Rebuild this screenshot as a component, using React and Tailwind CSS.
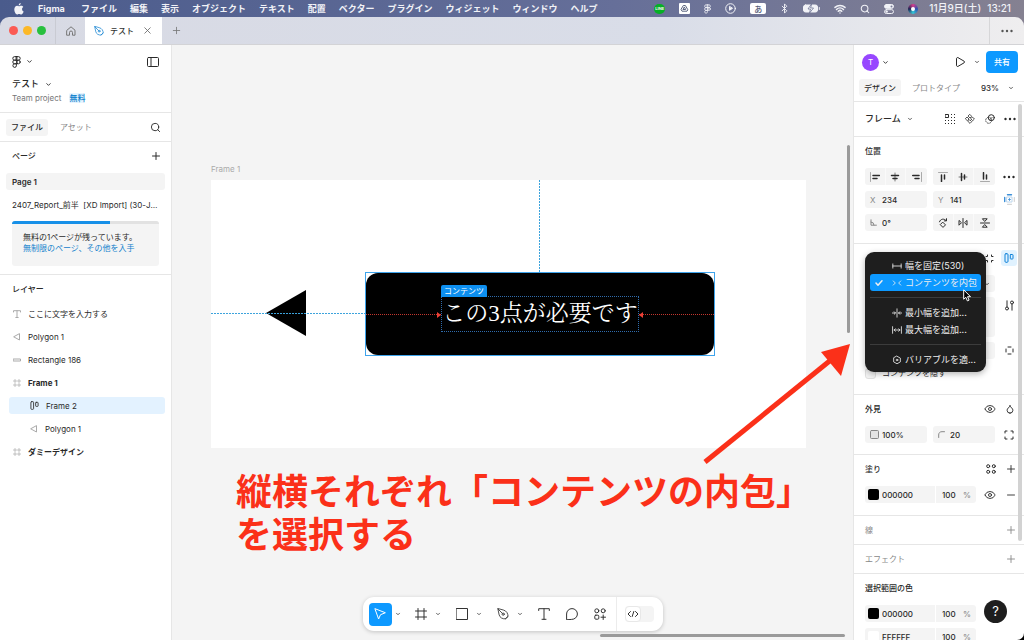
import React, { useState } from "react";
import {
  Bluetooth,
  ChevronDown,
  Droplet,
  Eye,
  Minus,
  Play,
  Plus,
  Search,
  Wifi,
  X,
} from "lucide-react";

const Svg = ({ w = 12, h = 12, box, className = "", children }) => (
  <svg
    width={w}
    height={h}
    viewBox={box || `0 0 ${w} ${h}`}
    fill="none"
    stroke="currentColor"
    strokeWidth="1"
    strokeLinecap="round"
    strokeLinejoin="round"
    className={`shrink-0 ${className}`}
    aria-hidden="true"
  >
    {children}
  </svg>
);

const FigmaIcon = ({ w = 9, h = 12 }) => (
  <Svg w={w} h={h} box="0 0 9 12">
    <path d="M4.5.6H2.6a1.8 1.8 0 0 0 0 3.6h1.9zM4.5.6h1.9a1.8 1.8 0 0 1 0 3.6H4.5zM4.5 4.2H2.6a1.8 1.8 0 0 0 0 3.6h1.9zM4.5 7.8H2.6a1.8 1.8 0 1 0 1.9 1.8z" />
    <circle cx="6.4" cy="6" r="1.8" />
  </Svg>
);

const PenIcon = ({ size = 12 }) => (
  <Svg w={size} h={size} box="0 0 14 14">
    <path d="M1 1l1.500 7c.8 3.200 4 5 7.500 4.600L12.800 10C13 6.500 11 3.200 8 2.500z" />
    <path d="M1.200 1.200l5 5" />
    <circle cx="7.200" cy="7.200" r="1.300" />
    <path d="M9.800 12.500l3-2.600" />
  </Svg>
);

const Dots = ({ className = "" }) => (
  <Svg w={12} h={4} className={className}>
    <g fill="currentColor" stroke="none">
      <circle cx="1.500" cy="2" r="1.200" />
      <circle cx="6" cy="2" r="1.200" />
      <circle cx="10.500" cy="2" r="1.200" />
    </g>
  </Svg>
);

const HashIcon = ({ size = 9 }) => (
  <Svg w={size} h={size} box="0 0 12 12">
    <path d="M3 .5v11M9 .5v11M.5 3h11M.5 9h11" />
  </Svg>
);

const Triangle = () => (
  <Svg w={8} h={8}>
    <path d="M6.500 1v6L1 4z" />
  </Svg>
);

const AutoLayoutIcon = ({ w = 10, h = 10 }) => (
  <Svg w={w} h={h} box="0 0 10 10">
    <rect x="1" y=".7" width="3" height="8.600" rx="1" />
    <rect x="6.300" y="1.500" width="2.700" height="4.500" rx=".6" />
  </Svg>
);

const Caret = ({ size = 7 }) => <ChevronDown size={size} strokeWidth={3} className="shrink-0" />;

const menus = [
  "ファイル",
  "編集",
  "表示",
  "オブジェクト",
  "テキスト",
  "配置",
  "ベクター",
  "プラグイン",
  "ウィジェット",
  "ウィンドウ",
  "ヘルプ",
];

const MenuBar = () => (
  <header className="flex h-[17px] items-center pr-[13px] pl-[14px] text-[9px] font-bold whitespace-nowrap text-[#f1f2f7]">
    <svg width="10" height="12" viewBox="0 0 10 12" fill="currentColor" aria-hidden="true">
      <path d="M6.700 0c.1 1.200-.9 2.400-2 2.400C4.600 1.300 5.600.2 6.700 0zM5 3.300c.5 0 1.200-.6 2.200-.6.900 0 1.700.5 2.100 1.200-1.900 1.100-1.500 3.800.4 4.600-.5 1.300-1.400 2.900-2.500 2.900-.8 0-1.100-.5-2.100-.5s-1.300.5-2 .5C1.700 11.400.3 8.700.3 6.500c0-2.300 1.400-3.700 2.800-3.700.8 0 1.400.5 1.900.5z" />
    </svg>
    <button className="ml-[14px] w-[43px] text-left">Figma</button>
    <nav className="flex gap-[13px]">
      {menus.map((name) => (
        <button key={name}>{name}</button>
      ))}
    </nav>
    <div className="ml-auto flex items-center gap-[14px] font-medium">
      <span className="flex h-[10px] w-[11px] items-center justify-center rounded-full bg-[#06b025] text-[4px] font-bold">
        LINE
      </span>
      <Svg w={11} h={11}>
        <rect width="11" height="11" rx="1" fill="#fff" stroke="none" />
        <path d="M4.700 2.500h1.700l2.400 4.200-.8 1.500H3L2.200 6.700zM4.300 6.500h2.400L5.500 4.300z" stroke="#5b6480" />
      </Svg>
      <FigmaIcon w={7} h={10} />
      <Svg w={11} h={11}>
        <circle cx="5.500" cy="5.500" r="4.800" />
        <path d="M4.500 3.700v3.600l2.800-1.800z" fill="currentColor" />
      </Svg>
      <span className="flex h-[11px] w-[16px] items-center justify-center rounded-[2px] bg-white text-[8px] text-[#555b78]">
        あ
      </span>
      <Bluetooth size={11} className="-mx-px" strokeWidth={2} />
      <Svg w={17} h={9}>
        <rect x=".5" y="1" width="14" height="7" rx="2" fill="currentColor" />
        <path d="M16.300 3.500v2" />
        <path d="M8.500 0L5 5h2.500L6.500 9l4-5H8z" fill="#fff" stroke="#6d7394" strokeWidth=".8" />
      </Svg>
      <Wifi size={12} strokeWidth={3} />
      <Search size={10} strokeWidth={2.5} />
      <Svg w={10} h={10}>
        <rect x=".5" y=".5" width="9" height="3.800" rx="1.900" fill="currentColor" />
        <circle cx="7.500" cy="2.400" r="1" fill="#777a96" stroke="none" />
        <rect x=".5" y="5.700" width="9" height="3.800" rx="1.900" />
        <circle cx="2.700" cy="7.600" r="1.200" fill="currentColor" stroke="none" />
      </Svg>
      <span className="h-[10px] w-[10px] rounded-full bg-[conic-gradient(#d33f8d,#2b4fae,#35c8d8,#1c2352,#d33f8d)] p-[3px]">
        <span className="block h-1 w-1 rounded-full bg-white" />
      </span>
      <time className="-ml-[3px] flex gap-[6px] text-[10px]">
        <span>11月9日(土)</span>
        <span>13:21</span>
      </time>
    </div>
  </header>
);

const TabBar = () => (
  <div className="flex h-[28px] items-stretch rounded-t-[9px] border-b border-[#d3d3d6] bg-linear-to-r from-[#d8dae4] via-[#d9dde8] via-65% to-[#efeeef] text-[8px] text-[#333]">
    <div className="flex w-[56px] items-center gap-[5px] border-r border-[#c9cbd3] pl-[9px]">
      <button aria-label="閉じる" className="h-[9px] w-[9px] rounded-full bg-[#fb5b54]" />
      <button aria-label="しまう" className="h-[9px] w-[9px] rounded-full bg-[#fcb827]" />
      <button aria-label="拡大" className="h-[9px] w-[9px] rounded-full bg-[#28c03e]" />
    </div>
    <button aria-label="ホーム" className="flex w-[29px] items-center justify-center text-[#777]">
      <Svg w={10} h={10}>
        <path d="M1 4.200L5 .8l4 3.400v5H6.500V6.500a1.500 1.500 0 0 0-3 0v2.700H1z" />
      </Svg>
    </button>
    <div className="flex w-[77px] items-center bg-white pl-[9px]">
      <span className="text-[#0d7fd0]">
        <PenIcon size={10} />
      </span>
      <span className="ml-[6px] font-medium">テスト</span>
      <button aria-label="タブを閉じる" className="ml-[8px] text-[#666]">
        <X size={11} strokeWidth={1.8} />
      </button>
    </div>
    <button aria-label="新しいタブ" className="flex w-[29px] items-center justify-center text-[#777]">
      <Plus size={11} strokeWidth={1.8} />
    </button>
    <button
      aria-label="その他"
      className="ml-auto flex w-[35px] items-center justify-center border-l border-[#d6d6d8] text-[#555]"
    >
      <Dots />
    </button>
  </div>
);

const layers = [
  {
    name: "ここに文字を入力する",
    icon: (
      <Svg w={8} h={8}>
        <path d="M.5 2V.700h7V2M4 .7v6.800M2.800 7.500h2.400" />
      </Svg>
    ),
  },
  { name: "Polygon 1", icon: <Triangle /> },
  {
    name: "Rectangle 186",
    icon: (
      <Svg w={8} h={8}>
        <rect x=".5" y="3" width="7" height="2" />
      </Svg>
    ),
  },
  { name: "Frame 1", icon: <HashIcon size={8} />, bold: true },
  { name: "Frame 2", icon: <AutoLayoutIcon w={9} h={9} />, child: true, selected: true },
  { name: "Polygon 1", icon: <Triangle />, child: true },
  { name: "ダミーデザイン", icon: <HashIcon size={8} />, bold: true },
];

const LeftPanel = () => (
  <aside className="w-[172px] shrink-0 border-r border-[#e6e6e6] bg-white">
    <div className="h-[68px] border-b border-[#e6e6e6] px-3">
      <div className="flex h-[33px] items-center justify-between">
        <button aria-label="メインメニュー" className="flex items-center gap-[5px]">
          <FigmaIcon />
          <Caret />
        </button>
        <button aria-label="サイドバー">
          <Svg w={12} h={10}>
            <rect x=".5" y=".5" width="11" height="9" rx="1" />
            <path d="M4 .5v9" />
          </Svg>
        </button>
      </div>
      <button className="flex h-[12px] items-center gap-[6px] text-[9px] font-medium">
        テスト
        <Caret />
      </button>
      <div className="flex h-[15px] items-center gap-2 text-[8px] text-[#777]">
        Team project
        <span className="rounded-[2px] bg-[#e5f4ff] leading-[10px] font-medium text-[#0a80cc]">無料</span>
      </div>
    </div>

    <div className="flex h-[29px] items-center border-b border-[#e6e6e6] pr-[10px] pl-[6px]">
      <button className="h-[17px] rounded-[3px] bg-[#f4f4f4] px-[5px] font-medium">ファイル</button>
      <button className="ml-[12px] text-[#888]">アセット</button>
      <button aria-label="検索" className="ml-auto">
        <Search size={11} strokeWidth={2} />
      </button>
    </div>

    <section className="border-b border-[#e6e6e6] pb-2">
      <div className="flex h-[27px] items-center justify-between pr-[9px] pl-3">
        <h2 className="font-medium">ページ</h2>
        <button aria-label="ページを追加">
          <Plus size={12} strokeWidth={2} />
        </button>
      </div>
      <div className="mt-1 px-[6px]">
        <button className="block h-[17px] w-full rounded-[3px] bg-[#f4f4f4] pl-[6px] text-left font-semibold">
          Page 1
        </button>
      </div>
      <button className="mt-[6px] block h-[17px] w-full truncate px-3 text-left whitespace-pre">
        {"2407_Report_前半  [XD Import] (30-June)"}
      </button>
      <div className="mx-3 mt-2 overflow-hidden rounded-[3px] bg-[#f4f4f4]">
        <div className="h-[3px] bg-[#e2e2e2]">
          <div className="h-[3px] w-2/3 bg-[#1790e8]" />
        </div>
        <div className="px-[11px] pt-2 pb-3 leading-[11px] whitespace-nowrap">
          <p>無料の1ページが残っています。</p>
          <a href="#upgrade" className="block text-[#1280cc]">
            無制限のページ、その他を入手
          </a>
        </div>
      </div>
    </section>

    <section>
      <h2 className="flex h-[27px] items-center pl-3 font-medium">レイヤー</h2>
      <ul>
        {layers.map((layer, i) => (
          <li key={i} className="flex h-[23px] items-center pr-[6px] pl-[9px]">
            <button
              className={`flex h-[17px] w-full items-center gap-[7px] rounded-[3px] ${
                layer.child ? "pl-[21px]" : "pl-1"
              } ${layer.selected ? "bg-[#e3f2ff]" : ""} ${layer.bold ? "font-bold" : ""}`}
            >
              <span className={layer.selected ? "text-[#333]" : "text-[#aaa]"}>{layer.icon}</span>
              {layer.name}
            </button>
          </li>
        ))}
      </ul>
    </section>
  </aside>
);

const tools = [
  { label: "フレーム", icon: <HashIcon size={12} />, menu: true },
  {
    label: "長方形",
    icon: (
      <Svg w={12} h={12}>
        <rect x=".5" y=".5" width="11" height="11" />
      </Svg>
    ),
    menu: true,
  },
  { label: "ペン", icon: <PenIcon />, menu: true },
  {
    label: "テキスト",
    icon: (
      <Svg>
        <path d="M.7 2.500V.7h10.600v1.800M6 .7v10.600M4 11.300h4" />
      </Svg>
    ),
  },
  {
    label: "コメント",
    icon: (
      <Svg>
        <path d="M.6 11.400V6A5.400 5.400 0 1 1 6 11.400z" />
      </Svg>
    ),
  },
  {
    label: "アクション",
    icon: (
      <Svg>
        <circle cx="2.800" cy="2.800" r="2" />
        <circle cx="9.200" cy="2.800" r="2" />
        <rect x=".8" y="7.200" width="4" height="4" rx="1" />
        <path d="M9.200 7v4.500M7 9.200h4.500" />
      </Svg>
    ),
  },
];

const Toolbar = () => (
  <div className="absolute inset-x-0 bottom-[9px] flex justify-center">
    <div className="flex h-[34px] items-center rounded-[11px] bg-white pl-[6px] text-[#333] shadow-[0_1px_4px_rgba(0,0,0,0.2)]">
      <button
        aria-label="移動"
        className="flex h-[23px] w-[23px] items-center justify-center rounded-[4px] bg-[#0d99ff] text-white"
      >
        <Svg>
          <path d="M1 1l3.600 10L6.500 6.700 11 4.900z" />
        </Svg>
      </button>
      <span className="ml-[3px]">
        <Caret size={6} />
      </span>
      <div className="ml-[14px] flex items-center gap-4">
        {tools.map((tool) => (
          <button
            key={tool.label}
            aria-label={tool.label}
            className={`flex items-center ${tool.menu ? "-mr-px gap-[8px]" : ""}`}
          >
            {tool.icon}
            {tool.menu && <Caret size={6} />}
          </button>
        ))}
      </div>
      <div className="ml-[10px] flex h-full items-center border-l border-[#ececec] pr-[9px] pl-[8px]">
        <button aria-label="開発モード" className="w-[29px] rounded-[4px] bg-[#f4f4f4]">
          <span className="flex h-4 w-4 items-center justify-center rounded-[4px] border border-[#e8e8e8] bg-white">
            <Svg w={12} h={8}>
              <path d="M3.500 1.500L1 4l2.500 2.500M8.500 1.500L11 4 8.500 6.500M6.800 1.500l-1.600 5" />
            </Svg>
          </span>
        </button>
      </div>
    </div>
  </div>
);

const Canvas = () => (
  <main className="relative min-w-0 flex-1 overflow-hidden bg-[#f4f4f4]">
    <span className="absolute top-[119px] left-[39px] leading-[11px] text-[#aaa]">Frame 1</span>
    <div className="absolute top-[135px] left-[39px] h-[268px] w-[595px] bg-white">
      <svg className="absolute top-[110px] left-[55px]" width="40" height="46" aria-hidden="true">
        <path d="M0 23L40 0v46z" fill="#000" />
      </svg>
      <svg className="absolute top-0 left-0" width="330" height="134" fill="none" stroke="#3da3dc" strokeDasharray="2 1" aria-hidden="true">
        <path d="M328.500 0v92M0 133.500h154" />
      </svg>

      <div className="absolute top-[92px] left-[154px] h-[84px] w-[350px] border border-[#3ea4ec]">
        <div className="flex h-full items-center rounded-[12px] bg-black">
          <div className="relative flex-1 border-t border-dotted border-[#c4372f]">
            <span className="absolute -top-[3px] right-0 border-y-[3px] border-l-4 border-y-transparent border-l-[#ee4035]" />
          </div>
          <div className="relative flex h-[36px] w-[198px] items-center justify-center border border-dotted border-[#2f6bab]">
            <span className="absolute bottom-full -left-px rounded-t-[2px] bg-[#0d8ff0] px-[3px] leading-[12px] whitespace-nowrap text-white">
              コンテンツ
            </span>
            <p className="font-['Liberation_Serif','Noto_Serif_CJK_JP','Noto_Sans_CJK_JP',serif] text-[23px] leading-[34px] whitespace-nowrap text-white">
              この3点が必要です
            </p>
          </div>
          <div className="relative flex-1 border-t border-dotted border-[#c4372f]">
            <span className="absolute -top-[3px] left-0 border-y-[3px] border-r-4 border-y-transparent border-r-[#ee4035]" />
          </div>
        </div>
      </div>
    </div>

    <p className="absolute top-[426px] left-[64px] font-['Liberation_Sans','Noto_Sans_CJK_JP',sans-serif] text-[36px] leading-[43px] font-bold whitespace-nowrap text-[#fb3019]">
      縦横それぞれ「コンテンツの内包」
      <br />
      を選択する
    </p>
    <svg
      className="absolute top-[295px] left-[529px]"
      width="152"
      height="126"
      aria-hidden="true"
    >
      <path d="M4 122L136 15" stroke="#fb3019" strokeWidth="5" />
      <path d="M149 4L120 12l20 24z" fill="#fb3019" />
    </svg>

    <Toolbar />
    <div className="absolute top-[100px] right-[3px] h-[188px] w-[3px] rounded-full bg-[#9a9a9a]" />
    <div className="absolute right-[8px] bottom-[3px] h-[3px] w-[245px] rounded-full bg-[#9a9a9a]" />
  </main>
);

const Section = ({ title, muted, actions, children, className = "" }) => (
  <section className={`border-b border-[#e6e6e6] pr-[7px] pl-[11px] ${className}`}>
    <div className="flex h-[28px] items-center justify-between">
      <h2 className={muted ? "text-[#888]" : "font-medium"}>{title}</h2>
      <div className="flex items-center gap-[9px]">{actions}</div>
    </div>
    {children}
  </section>
);

const Row = ({ children }) => (
  <div className="grid grid-cols-[1fr_1fr_16px] items-center gap-[6px]">{children}</div>
);

const Field = ({ label, icon, value }) => (
  <label className="flex h-[17px] items-center rounded-[3px] bg-[#f4f4f4] pl-[5px] font-medium">
    <span className="flex w-[12px] shrink-0 font-normal text-[#888]">{icon || label}</span>
    <input aria-label={label} defaultValue={value} className="w-full min-w-0 bg-transparent outline-none" />
  </label>
);

const Segments = ({ items }) => (
  <div className="grid h-[17px] grid-cols-3 overflow-hidden rounded-[3px] bg-[#fafafa]">
    {items.map(([label, path]) => (
      <button key={label} aria-label={label} className="flex items-center justify-center border-r border-[#fafafa] bg-[#f4f4f4] last:border-r-0">
        <Svg w={10} h={10}>{path}</Svg>
      </button>
    ))}
  </div>
);

const horizontal = [
  ["左揃え", <><path d="M.5.5v9" stroke="#aaa" /><path d="M3 3.500h6.500M3 6.500h4" strokeWidth="1.500" /></>],
  ["水平中央", <><path d="M5 1v8" stroke="#777" /><path d="M1.500 3.500h7M3 6.500h4" strokeWidth="1.500" /></>],
  ["右揃え", <><path d="M9.500.5v9" stroke="#aaa" /><path d="M.7 3.500H7M3 6.500h4" strokeWidth="1.500" /></>],
];

const vertical = [
  ["上揃え", <><path d="M.5.5h9" stroke="#aaa" /><path d="M3.500 3v6.500M6.500 3v4" strokeWidth="1.500" /></>],
  ["垂直中央", <><path d="M1 5h8" stroke="#777" /><path d="M3.500 1.500v7M6.500 3v4" strokeWidth="1.500" /></>],
  ["下揃え", <><path d="M.5 9.500h9" stroke="#aaa" /><path d="M3.500.7V7M6.500 3v4" strokeWidth="1.500" /></>],
];

const transforms = [
  ["回転", <><path d="M5 4.400l2.500 2.500L5 9.400 2.500 6.900z" /><path d="M1.500 3.800C2.500.5 6.500.3 8.300 2.700M8.500.7v2.200H6.300" /></>],
  ["左右反転", <><path d="M5 .5v9M1 2.800v4.400L3.200 5zM9 2.800v4.400L6.800 5z" /></>],
  ["上下反転", <><path d="M.5 5h9M2.800.8h4.400L5 3.200zM2.800 9.200h4.400L5 6.800z" /></>],
];

const ColorRow = ({ color, swatch, children }) => (
  <div className="flex items-center">
    <div className="flex h-[17px] w-[111px] overflow-hidden rounded-[3px] bg-[#f4f4f4] font-medium">
      <label className="flex w-[71px] items-center border-r border-white pl-[3px]">
        <span className={`mr-[3px] h-[11px] w-[11px] shrink-0 rounded-[2px] ${swatch}`} />
        <input aria-label="色" defaultValue={color} className="w-full min-w-0 bg-transparent outline-none" />
      </label>
      <label className="flex flex-1 items-center justify-between pr-[5px] pl-[6px]">
        <input aria-label="不透明度" defaultValue="100" className="w-[18px] bg-transparent outline-none" />
        <span className="text-[#888]">%</span>
      </label>
    </div>
    <div className="ml-auto flex items-center gap-[9px]">{children}</div>
  </div>
);

const sizeOptions = [
  { label: "幅を固定(530)", path: <path d="M1 3.500v5M11 3.500v5M1 6h10" /> },
  { label: "コンテンツを内包", path: <path d="M1.500 3.500L4 6 1.500 8.500M10.500 3.500L8 6l2.500 2.500" /> },
  { label: "最小幅を追加...", path: <path d="M6 1v10M.5 6h3.500M2.700 4.500L4.200 6 2.700 7.500M11.500 6H8M9.300 4.500L7.800 6l1.500 1.500" />, divider: true },
  { label: "最大幅を追加...", path: <path d="M.7 2v8M11.300 2v8M2.500 6h7M4 4.500L2.500 6 4 7.500M8 4.500L9.500 6 8 7.500" /> },
  { label: "バリアブルを適...", path: <><path d="M6 1.500l4 2.200v4.600l-4 2.200-4-2.200V3.700z" /><circle cx="6" cy="6" r="1" /></>, divider: true },
];

const SizeMenu = () => {
  const [selected, setSelected] = useState("コンテンツを内包");

  return (
    <div
      role="menu"
      className="absolute top-[8px] left-[11px] z-10 w-[121px] rounded-[9px] bg-[#1e1e1e] px-[5px] pt-[5px] pb-1 text-[9px] text-[#eee] shadow-[0_2px_6px_rgba(0,0,0,0.3)]"
    >
      {sizeOptions.map((option) => (
        <React.Fragment key={option.label}>
          {option.divider && <div className="my-[6px] h-px bg-[#3c3c3c]" />}
          <button
            role="menuitemradio"
            aria-checked={selected === option.label}
            onClick={() => setSelected(option.label)}
            className={`flex h-[17px] w-full items-center rounded-[3px] pl-[5px] whitespace-nowrap ${
              selected === option.label ? "bg-[#0d99ff]" : ""
            }`}
          >
            <span className="w-[17px]">
              {selected === option.label && (
                <Svg w={8} h={8}>
                  <path d="M1 4l2 2.200L7 1.800" strokeWidth="1.500" />
                </Svg>
              )}
            </span>
            <Svg w={10} h={10} box="0 0 12 12" className="mr-[3px]">{option.path}</Svg>
            {option.label}
          </button>
        </React.Fragment>
      ))}
      <svg className="absolute top-[37px] left-[98px]" width="9" height="13" viewBox="0 0 9 13" aria-hidden="true">
        <path d="M.7.8v9.400l2.100-1.900 1.600 3.600 1.700-.8-1.600-3.400h3z" fill="#000" stroke="#fff" />
      </svg>
    </div>
  );
};

const FourDots = () => (
  <Svg w={10} h={10}>
    <circle cx="2.200" cy="2.200" r="1.500" />
    <circle cx="7.800" cy="2.200" r="1.500" />
    <circle cx="2.200" cy="7.800" r="1.500" />
    <circle cx="7.800" cy="7.800" r="1.500" />
  </Svg>
);

const IconButton = ({ label, className = "", children }) => (
  <button aria-label={label} className={`flex h-4 w-4 items-center justify-center ${className}`}>
    {children}
  </button>
);

const RightPanel = () => (
  <aside className="relative w-[171px] shrink-0 overflow-hidden border-l border-[#e6e6e6] bg-white">
    <div className="flex h-[34px] items-center pr-[6px] pl-2">
      <button aria-label="アカウント" className="flex items-center gap-[3px]">
        <span className="flex h-[17px] w-[17px] items-center justify-center rounded-full bg-[#9747ff] text-white">T</span>
        <Caret />
      </button>
      <button aria-label="プレビュー" className="ml-auto flex items-center gap-[8px]">
        <Play size={12} strokeWidth={2} />
        <Caret size={6} />
      </button>
      <button className="ml-[6px] h-[22px] w-[32px] rounded-[4px] bg-[#0d99ff] font-medium text-white">共有</button>
    </div>
    <div className="flex h-[23px] items-start border-b border-[#e6e6e6] pr-[10px] pl-[5px]">
      <button className="h-[17px] w-[42px] rounded-[3px] bg-[#f4f4f4] font-medium">デザイン</button>
      <button className="ml-[11px] h-[17px] text-[#888]">プロトタイプ</button>
      <button className="ml-auto flex h-[17px] items-center gap-[9px] font-medium">
        93%
        <Caret size={6} />
      </button>
    </div>
    <div className="flex h-[35px] items-center border-b border-[#e6e6e6] pr-[6px] pl-[11px]">
      <button className="flex items-center gap-[6px] text-[9px] font-medium">
        フレーム
        <Caret size={6} />
      </button>
      <div className="ml-auto flex items-center gap-1">
        <IconButton label="選択">
          <Svg w={10} h={10}>
            <rect x=".5" y=".5" width="3" height="3" />
            <path
              d="M6 .5h1M9 .5h1M6 3.500h1M9 3.500h1M0 6.500h1M3 6.500h1M6 6.500h1M9 6.500h1M0 9.500h1M3 9.500h1M6 9.500h1M9 9.500h1"
              strokeLinecap="butt"
            />
          </Svg>
        </IconButton>
        <IconButton label="コンポーネント">
          <Svg w={10} h={10}>
            <path
              d="M5 .6l1.700 1.700L5 4 3.300 2.300zM5 6l1.700 1.700L5 9.400 3.300 7.700zM2.300 3.300L4 5 2.300 6.700.6 5zM7.700 3.300L9.400 5 7.700 6.700 6 5z"
              strokeWidth=".8"
            />
          </Svg>
        </IconButton>
        <IconButton label="マスク">
          <Svg w={10} h={10}>
            <circle cx="6.300" cy="3.700" r="3" />
            <circle cx="3.700" cy="6.300" r="3" strokeDasharray="1 1.500" strokeWidth=".8" />
            <path d="M5 5.500l2-2" />
          </Svg>
        </IconButton>
        <IconButton label="その他">
          <Dots />
        </IconButton>
      </div>
    </div>

    <Section title="位置" className="pb-3">
      <div className="mt-[3px] flex flex-col gap-[6px]">
        <Row>
          <Segments items={horizontal} />
          <Segments items={vertical} />
          <IconButton label="その他">
            <Dots />
          </IconButton>
        </Row>
        <Row>
          <Field label="X" value="234" />
          <Field label="Y" value="141" />
          <IconButton label="絶対位置" className="text-[#3b8fd8]">
            <Svg w={11} h={11}>
              <path d="M3.500.7h4M.7 3.500v4" strokeWidth="1.400" />
              <path d="M10.300 3.500v4M3.500 10.300h4" stroke="#ccc" />
              <rect x="3" y="3" width="5" height="5" stroke="#bdd6ec" />
              <path d="M5.500 4.500v2M4.500 5.500h2" strokeWidth=".8" />
            </Svg>
          </IconButton>
        </Row>
        <Row>
          <Field
            label="角度"
            icon={
              <Svg w={7} h={7}>
                <path d="M1 .8v5.400h5.400M1 3a3 3 0 0 1 3 3" />
              </Svg>
            }
            value="0°"
          />
          <Segments items={transforms} />
        </Row>
      </div>
    </Section>

    <section className="relative border-b border-[#e6e6e6] pr-[7px] pb-[12px] pl-[11px]">
      <div className="flex h-[28px] items-center justify-end gap-[4px]">
        <IconButton label="サイズ自動調整">
          <Svg w={9} h={9}>
            <path d="M1 2.500h1.500V1M8 2.500H6.500V1M1 6.500h1.500V8M8 6.500H6.500V8" />
          </Svg>
        </IconButton>
        <IconButton label="オートレイアウト" className="rounded-[3px] bg-[#e0f2ff] text-[#0d80d8]">
          <AutoLayoutIcon />
        </IconButton>
      </div>
      <div className="mt-[3px] flex flex-col gap-[5px]">
        <Row>
          <div className="h-[17px] rounded-[3px] bg-[#f4f4f4]" />
          <button aria-label="高さ" className="flex h-[17px] items-center justify-end rounded-[3px] bg-[#f4f4f4] pr-[5px]">
            <Caret size={6} />
          </button>
        </Row>
        <Row>
          <div className="h-[40px] rounded-[3px] bg-[#f4f4f4]" />
          <div className="h-[40px] rounded-[3px] bg-[#f4f4f4]" />
          <IconButton label="詳細設定" className="self-start">
            <Svg w={9} h={11}>
              <path d="M2 .8v6M7 4v6.200" />
              <circle cx="2" cy="8.500" r="1.500" />
              <circle cx="7" cy="2.500" r="1.500" />
            </Svg>
          </IconButton>
        </Row>
        <Row>
          <div className="h-[17px] rounded-[3px] bg-[#f4f4f4]" />
          <div className="h-[17px] rounded-[3px] bg-[#f4f4f4]" />
          <IconButton label="個別パディング">
            <Svg w={9} h={9}>
              <path d="M3 1h3M3 8h3M1 3v3M8 3v3" />
            </Svg>
          </IconButton>
        </Row>
        <label className="flex h-[18px] items-center gap-[6px]">
          <input
            type="checkbox"
            className="h-[11px] w-[11px] appearance-none rounded-[3px] border border-[#e0e0e0] bg-[#f4f4f4]"
          />
          コンテンツを隠す
        </label>
      </div>
      <SizeMenu />
    </section>

    <Section
      title="外見"
      className="pb-[11px]"
      actions={
        <>
          <button aria-label="表示">
            <Eye size={12} strokeWidth={1.8} />
          </button>
          <button aria-label="ブレンド" className="pr-[2px]">
            <Droplet size={10} strokeWidth={2.2} />
          </button>
        </>
      }
    >
      <div className="mt-[3px]">
        <Row>
          <Field
            label="不透明度"
            icon={
              <Svg w={9} h={9}>
                <rect x=".5" y=".5" width="8" height="8" rx="1" fill="#e4e4e4" />
              </Svg>
            }
            value="100%"
          />
          <Field
            label="角の半径"
            icon={
              <Svg w={7} h={7}>
                <path d="M.7 6.500V4A3 3 0 0 1 4 .7h2.500" />
              </Svg>
            }
            value="20"
          />
          <IconButton label="角を個別に設定">
            <Svg w={10} h={10}>
              <path d="M1 3V1h2M7 1h2v2M9 7v2H7M3 9H1V7" />
            </Svg>
          </IconButton>
        </Row>
      </div>
    </Section>

    <Section
      title="塗り"
      className="pb-3"
      actions={
        <>
          <button aria-label="スタイル">
            <FourDots />
          </button>
          <button aria-label="塗りを追加">
            <Plus size={12} strokeWidth={1.8} />
          </button>
        </>
      }
    >
      <div className="mt-[3px]">
        <ColorRow color="000000" swatch="bg-black">
          <button aria-label="表示">
            <Eye size={12} strokeWidth={1.8} />
          </button>
          <button aria-label="塗りを削除">
            <Minus size={12} strokeWidth={1.8} />
          </button>
        </ColorRow>
      </div>
    </Section>

    {["線", "エフェクト"].map((title) => (
      <Section
        key={title}
        title={title}
        muted
        actions={
          <button aria-label={`${title}を追加`} className="text-[#888]">
            <Plus size={12} strokeWidth={1.8} />
          </button>
        }
      />
    ))}

    <Section title="選択範囲の色">
      <div className="mt-[3px] flex flex-col gap-[6px]">
        <ColorRow color="000000" swatch="bg-black" />
        <ColorRow color="FFFFFF" swatch="bg-white" />
      </div>
    </Section>

    <div className="absolute top-[59px] right-[2px] h-[437px] w-[4px] rounded-full bg-[#d2d2d2]" />
    <button className="absolute right-[17px] bottom-[17px] h-[23px] w-[23px] rounded-full bg-[#1e1e1e] text-[13px] leading-[23px] text-white">
      ?
    </button>
  </aside>
);

const App = () => (
  <div className="flex h-screen flex-col overflow-hidden bg-black font-['Inter','Noto_Sans_CJK_JP',sans-serif] text-[8px] text-[#2a2a2a]">
    <div className="shrink-0 bg-linear-to-r from-[#4a5b8c] via-[#666f99] via-60% to-[#858191]">
      <MenuBar />
      <TabBar />
    </div>
    <div className="flex min-h-0 flex-1 overflow-hidden rounded-br-[7px]">
      <LeftPanel />
      <Canvas />
      <RightPanel />
    </div>
  </div>
);

export default App;
